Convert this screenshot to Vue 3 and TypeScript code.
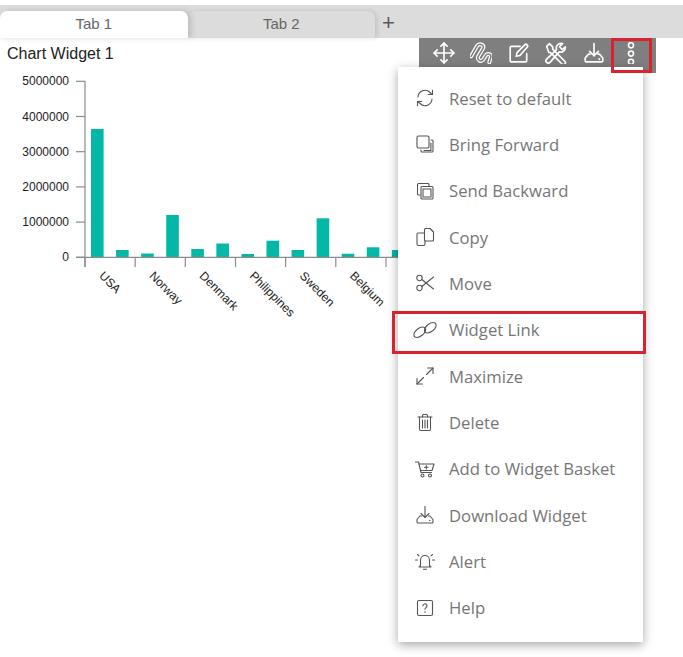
<script setup lang="ts">
interface Icon { paths: string[]; outlined?: boolean }

const circle = (x: number, y: number, r: number): string =>
  `M${x - r} ${y}a${r} ${r} 0 1 0 ${2 * r} 0a${r} ${r} 0 1 0 ${-2 * r} 0z`

const trayPaths = ['M10 1.5v11', 'M6 8.5l4 4 4-4', 'M6.5 11H5l-3 3.5V17a1 1 0 0 0 1 1h14a1 1 0 0 0 1-1v-2.5L15 11h-1.5', 'M14.5 15.5h.6']

const toolIcons: Icon[] = [
  { paths: ['M10 1v18M1 10h18', 'M7.2 3.8L10 1l2.8 2.8', 'M7.2 16.2L10 19l2.8-2.8', 'M3.8 7.2L1 10l2.8 2.8', 'M16.2 7.2L19 10l-2.8 2.8'] },
  { paths: ['M1 13L6.5 3.5C8 1 13 2 12 5.5L7.5 13C6 16.5 10 18.5 12 16L14.5 12C16 10 19.5 11 19 13.5L17.5 18.5'], outlined: true },
  { paths: ['M17 10.5V17a1 1 0 0 1-1 1H3a1 1 0 0 1-1-1V5a1 1 0 0 1 1-1h8', 'M7.5 13l.7-3.3L15.7 2.2c.8-.8 2.9 1.3 2.1 2.1L10.8 12.3z'] },
  { paths: ['M1.5 4L4 1.500l3 3v2l11 11a1.600 1.600 0 0 1-2.500 2.500L4.800 9.500H3.500z', 'M18.500 4.500a4.300 4.300 0 0 1-5.500 4.500L4.500 18.500a1.700 1.700 0 0 1-3-3L10.500 7a4.300 4.300 0 0 1 5.500-5.500l-2.800 2.800 2.500 2.700z'] },
  { paths: trayPaths },
  { paths: [circle(10, 3, 2.3), circle(10, 10.5, 2.3), circle(10, 18, 2.3)] },
]

const menuItems: { label: string; paths: string[]; boxed?: boolean }[] = [
  { label: 'Reset to default', paths: ['M3 9a7 7 0 0 1 12-4.5L17 6.5', 'M17.5 2.2v4.3h-4.3', 'M17 11a7 7 0 0 1-12 4.5L3 13.5', 'M2.5 17.8v-4.3h4.3'] },
  { label: 'Bring Forward', paths: ['M2 3.5A1.5 1.5 0 0 1 3.5 2h9A1.5 1.5 0 0 1 14 3.5v9a1.5 1.5 0 0 1-1.5 1.5h-9A1.5 1.5 0 0 1 2 12.5z', 'M16 6h1a1 1 0 0 1 1 1v10a1 1 0 0 1-1 1H7a1 1 0 0 1-1-1v-1', 'M15.9 9v7.5H9'] },
  { label: 'Send Backward', paths: ['M2.5 13V3.5a1 1 0 0 1 1-1H13', 'M2.5 13a1 1 0 0 0 1 1H5', 'M13 2.5a1 1 0 0 1 1 1V5', 'M6 6.5A1 1 0 0 1 7 5.5h10a1 1 0 0 1 1 1v10.5a1 1 0 0 1-1 1H7a1 1 0 0 1-1-1z', 'M8 8h8v8H8z'] },
  { label: 'Copy', paths: ['M9.5 2.5a1 1 0 0 1 1-1H15l3.5 3.5v8a1 1 0 0 1-1 1h-7a1 1 0 0 1-1-1z', 'M9.5 6H3.5a1.5 1.5 0 0 0-1.5 1.5V17a1.5 1.5 0 0 0 1.5 1.5h5a1.5 1.5 0 0 0 1.5-1.5V14'] },
  { label: 'Move', paths: [circle(4.5, 5, 2.7), circle(4.5, 15, 2.7), 'M6.8 6.5L18.5 16', 'M6.8 13.5L18.5 4'] },
  { label: 'Widget Link', boxed: true, paths: ['M-.7 16.5A7 4.6 -38 0 1 10.2 8A7 4.6 -38 0 1 -.7 16.5z', 'M9.8 12A7 4.6 -38 0 1 20.7 3.500A7 4.6 -38 0 1 9.8 12z'] },
  { label: 'Maximize', paths: ['M2 18l6.5-6.5', 'M2 12.5V18h5.5', 'M18 2l-6.5 6.5', 'M12.5 2H18v5.5'] },
  { label: 'Delete', paths: ['M3 5h14', 'M7.5 5V3.5a1 1 0 0 1 1-1h3a1 1 0 0 1 1 1V5', 'M4.5 5v12a1.5 1.5 0 0 0 1.5 1.5h8a1.5 1.5 0 0 0 1.5-1.5V5', 'M7.5 8v8M10 8v8M12.5 8v8'] },
  { label: 'Add to Widget Basket', paths: ['M.5 3h3l2.5 10.5h10.5', 'M4 5h15l-2 6.5H5.5', 'M11.3 6.5v3.5M9.5 8.200h3.600', circle(7.5, 16.5, 1.5), circle(15, 16.5, 1.5)] },
  { label: 'Download Widget', paths: trayPaths },
  { label: 'Alert', paths: ['M5.5 14.5V9a4.5 4.5 0 0 1 9 0v5.5l1.5 1.500H4z', 'M8.5 18.2h3', 'M.5 9h2M17.5 9h2M2.5 3.5L4 4.8M17.5 3.5L16 4.8'] },
  { label: 'Help', paths: ['M2.5 4A1.5 1.5 0 0 1 4 2.5h12A1.5 1.5 0 0 1 17.5 4v12a1.5 1.5 0 0 1-1.5 1.5H4A1.5 1.5 0 0 1 2.5 16z', 'M8 7.8a2 2 0 1 1 3.1 1.7c-.8.5-1.1.9-1.1 1.8', 'M10 13.5v.8'] },
]

const baseline = 257.3
const yTicks = [0, 1, 2, 3, 4, 5].map((n) => ({
  label: String(n * 1000000),
  y: baseline - n * 35.2,
}))
const xLabels = ['USA', 'Norway', 'Denmark', 'Philippines', 'Sweden', 'Belgium']
const xTicks = [85, 135.2, 185.3, 235.5, 285.6, 335.8, 386]
const barTops = [129, 250, 253.5, 215, 249, 243.5, 254, 240.7, 250, 218.3, 253.7, 247.3, 250]
const bars = barTops.map((top, i) => ({ x: 91 + i * 25.07, y: top, h: baseline - top }))
</script>

<template>
  <div class="page">
    <div class="tabbar">
      <div class="tab active">Tab 1</div>
      <div class="tab">Tab 2</div>
      <div class="add">+</div>
    </div>
    <div class="content">
      <div class="head">
        <div class="title">Chart Widget 1</div>
        <div class="toolbar">
          <div v-for="(icon, i) in toolIcons" :key="i" class="tool">
            <svg width="22" height="22" viewBox="0 0 20 20" fill="none">
              <template v-if="icon.outlined">
                <path v-for="d in icon.paths" :key="d" :d="d" class="under" />
                <path v-for="d in icon.paths" :key="d + 'o'" :d="d" class="over" />
              </template>
              <template v-else>
                <path v-for="d in icon.paths" :key="d" :d="d" class="line" />
              </template>
            </svg>
          </div>
          <div class="more-mark"></div>
        </div>
      </div>
      <svg class="chart" width="398" height="270" viewBox="0 73 398 270">
        <rect v-for="(b, i) in bars" :key="i" :x="b.x" :y="b.y" width="12.6" :height="b.h" class="bar" />
        <path class="axis" d="M85 81V267M76 257.3H398" />
        <g v-for="t in yTicks" :key="t.label">
          <path class="axis" :d="`M76 ${t.y}H85`" />
          <text x="69" :y="t.y + 4" text-anchor="end" class="ylab">{{ t.label }}</text>
        </g>
        <path v-for="x in xTicks" :key="x" class="axis" :d="`M${x} 257V267`" />
        <text
          v-for="(l, i) in xLabels"
          :key="l"
          class="xlab"
          :transform="`translate(${98.5 + i * 50.15} 276.5) rotate(45)`"
        >{{ l }}</text>
      </svg>
      <div class="menu">
        <div v-for="item in menuItems" :key="item.label" class="item">
          <svg class="micon" width="20" height="20" viewBox="0 0 20 20" fill="none">
            <path v-for="d in item.paths" :key="d" :d="d" />
          </svg>
          <span>{{ item.label }}</span>
          <div v-if="item.boxed" class="link-mark"></div>
        </div>
      </div>
    </div>
  </div>
</template>

<style scoped>
.page {
  width: 683px;
  height: 657px;
  padding-top: 5px;
  box-sizing: border-box;
  background: #fff;
  overflow: hidden;
  font-family: "Liberation Sans", Arial, sans-serif;
}
.tabbar {
  height: 33px;
  padding-top: 6px;
  box-sizing: border-box;
  display: flex;
  background: #dcdcdc;
}
.tab {
  width: 187.5px;
  height: 27px;
  line-height: 25px;
  text-align: center;
  font-size: 15px;
  color: #666;
  background: #dcdcdc;
  border-radius: 7px 7px 0 0;
  box-shadow: 2px 0 5px rgba(0, 0, 0, 0.12);
}
.tab.active {
  background: #fff;
  position: relative;
  z-index: 1;
  box-shadow: 3px 0 6px rgba(0, 0, 0, 0.15);
}
.add {
  margin-left: 7px;
  font-size: 22px;
  line-height: 24px;
  color: #5f555f;
}
.content {
  position: relative;
}
.head {
  height: 35px;
  display: flex;
  justify-content: space-between;
}
.title {
  padding: 7px 0 0 7px;
  font-size: 16px;
  line-height: 18px;
  color: #222;
}
.toolbar {
  position: relative;
  width: 237px;
  margin-right: 27px;
  padding: 0 6px;
  box-sizing: border-box;
  height: 35px;
  background: #7f7f7f;
  display: flex;
}
.tool {
  flex: 1;
  height: 29px;
  display: flex;
  align-items: center;
  justify-content: center;
}
.line {
  stroke: #fff;
  stroke-width: 1.5;
  stroke-linecap: round;
  stroke-linejoin: round;
}
.under {
  stroke: #fff;
  stroke-width: 3.6;
  stroke-linecap: round;
  stroke-linejoin: round;
}
.over {
  stroke: #7f7f7f;
  stroke-width: 1.4;
  stroke-linecap: round;
  stroke-linejoin: round;
}
.more-mark {
  position: absolute;
  left: 192px;
  top: 0;
  width: 41px;
  height: 35px;
  box-sizing: border-box;
  border: 3px solid #d8232f;
  z-index: 3;
}
.chart {
  display: block;
}
.bar {
  fill: #03b8a6;
}
.axis {
  fill: none;
  stroke: #8c8c8c;
  stroke-width: 1.2;
}
.ylab,
.xlab {
  font-size: 12px;
  fill: #1c1c1c;
}
.menu {
  position: absolute;
  left: 398px;
  top: 29px;
  width: 245px;
  height: 575px;
  padding: 8px 0 11px;
  box-sizing: border-box;
  display: flex;
  flex-direction: column;
  background: #fff;
  box-shadow: 0 3px 10px rgba(0, 0, 0, 0.35);
  font-family: "Open Sans", sans-serif;
  font-size: 16.7px;
  color: #767676;
  z-index: 2;
}
.item {
  position: relative;
  flex: 1;
  display: flex;
  align-items: center;
  gap: 14px;
  padding-left: 17px;
}
.micon {
  flex: none;
  overflow: visible;
  stroke: #555;
  stroke-width: 1.1;
  stroke-linecap: round;
  stroke-linejoin: round;
}
.link-mark {
  position: absolute;
  left: -6px;
  right: -3px;
  top: 4.5px;
  bottom: -1.5px;
  border: 3px solid #d8232f;
}
</style>
